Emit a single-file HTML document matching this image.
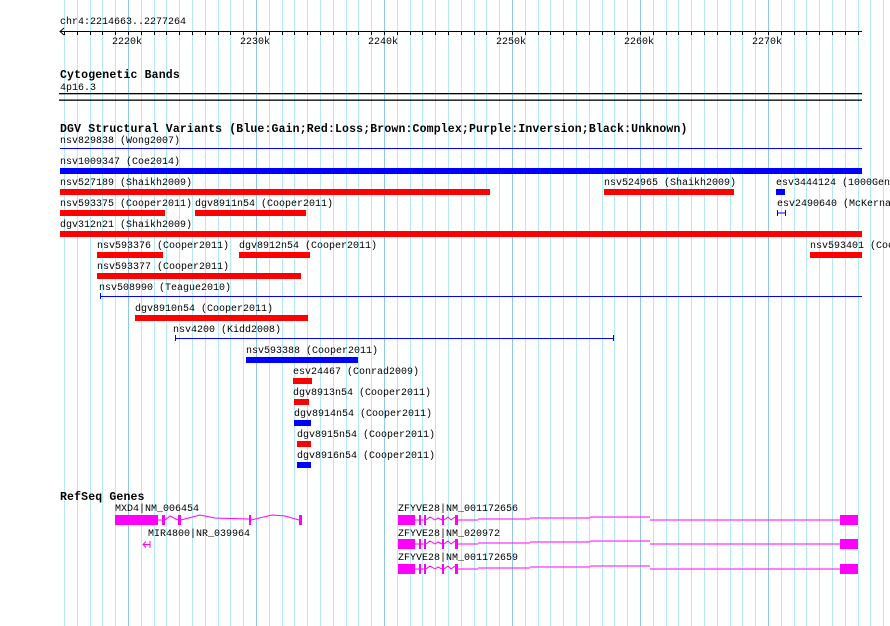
<!DOCTYPE html>
<html><head><meta charset="utf-8"><style>
html,body{margin:0;padding:0;background:#fff;width:890px;height:626px;overflow:hidden}
svg text{font-family:"Liberation Mono","DejaVu Sans Mono",monospace;font-size:10px;fill:#000}
svg text.h{font-weight:bold;font-size:11.5px;letter-spacing:0.15px}
</style></head><body>
<svg id="s" width="890" height="626" xmlns="http://www.w3.org/2000/svg">
<g id="grid"></g>
<g id="ticks"></g>
<text x="60" y="24">chr4:2214663..2277264</text>
<line x1="60" y1="31.5" x2="862" y2="31.5" stroke="#000"/>
<path d="M64 28 L60 31.5 L64 35" fill="none" stroke="#000"/>
<text x="112" y="44">2220k</text>
<text x="240" y="44">2230k</text>
<text x="368" y="44">2240k</text>
<text x="496" y="44">2250k</text>
<text x="624" y="44">2260k</text>
<text x="752" y="44">2270k</text>

<text class="h" x="60" y="78">Cytogenetic Bands</text>
<text x="60" y="90">4p16.3</text>
<rect x="59" y="93" width="803" height="1.3" fill="#000"/>
<rect x="59" y="99.5" width="803" height="1.3" fill="#000"/>

<text class="h" x="60" y="132">DGV Structural Variants (Blue:Gain;Red:Loss;Brown:Complex;Purple:Inversion;Black:Unknown)</text>
<text x="60" y="143">nsv829838 (Wong2007)</text>
<rect x="60" y="148" width="802" height="1" fill="#00f"/>
<text x="60" y="164">nsv1009347 (Coe2014)</text>
<rect x="60" y="168" width="802" height="6" fill="#00f"/>
<text x="60" y="185">nsv527189 (Shaikh2009)</text>
<rect x="60" y="189" width="430" height="6" fill="#f00"/>
<text x="604" y="185">nsv524965 (Shaikh2009)</text>
<rect x="604" y="189" width="130" height="6" fill="#f00"/>
<text x="776" y="185">esv3444124 (1000Gen</text>
<rect x="776" y="189" width="9" height="6" fill="#00f"/>
<text x="60" y="206">nsv593375 (Cooper2011)</text>
<rect x="60" y="210" width="105" height="6" fill="#f00"/>
<text x="195" y="206">dgv8911n54 (Cooper2011)</text>
<rect x="195" y="210" width="111" height="6" fill="#f00"/>
<text x="777" y="206">esv2490640 (McKerna</text>
<path d="M777.5 210v6M785.5 210v6M777 213h9" stroke="#00f"/>
<text x="60" y="227">dgv312n21 (Shaikh2009)</text>
<rect x="60" y="231" width="802" height="6" fill="#f00"/>
<text x="97" y="248">nsv593376 (Cooper2011)</text>
<rect x="97" y="252" width="66" height="6" fill="#f00"/>
<text x="239" y="248">dgv8912n54 (Cooper2011)</text>
<rect x="239" y="252" width="71" height="6" fill="#f00"/>
<text x="810" y="248">nsv593401 (Coo</text>
<rect x="810" y="252" width="52" height="6" fill="#f00"/>
<text x="97" y="269">nsv593377 (Cooper2011)</text>
<rect x="97" y="273" width="204" height="6" fill="#f00"/>
<text x="99" y="290">nsv508990 (Teague2010)</text>
<rect x="100" y="296" width="762" height="1" fill="#00f"/>
<rect x="100" y="293" width="1" height="6" fill="#00f"/>
<text x="135" y="311">dgv8910n54 (Cooper2011)</text>
<rect x="135" y="315" width="173" height="6" fill="#f00"/>
<text x="173" y="332">nsv4200 (Kidd2008)</text>
<rect x="175" y="338" width="439" height="1" fill="#00f"/>
<rect x="175" y="335" width="1" height="6" fill="#00f"/>
<rect x="613" y="335" width="1" height="6" fill="#00f"/>
<text x="246" y="353">nsv593388 (Cooper2011)</text>
<rect x="246" y="357" width="112" height="6" fill="#00f"/>
<text x="293" y="374">esv24467 (Conrad2009)</text>
<rect x="293" y="378" width="19" height="6" fill="#f00"/>
<text x="293" y="395">dgv8913n54 (Cooper2011)</text>
<rect x="294" y="399" width="15" height="6" fill="#f00"/>
<text x="294" y="416">dgv8914n54 (Cooper2011)</text>
<rect x="294" y="420" width="17" height="6" fill="#00f"/>
<text x="297" y="437">dgv8915n54 (Cooper2011)</text>
<rect x="297" y="441" width="14" height="6" fill="#f00"/>
<text x="297" y="458">dgv8916n54 (Cooper2011)</text>
<rect x="297" y="462" width="14" height="6" fill="#00f"/>

<text class="h" x="60" y="500">RefSeq Genes</text>
<text x="115" y="511">MXD4|NM_006454</text>
<g fill="#f0f" stroke="none">
<rect x="115" y="515" width="43" height="10"/>
<rect x="162" y="515" width="3" height="10"/>
<rect x="178" y="515" width="3" height="10"/>
<rect x="249" y="515" width="2" height="10"/>
<rect x="299" y="515" width="3" height="10"/>
</g>
<path d="M158 520 L162 520 M165 520 L170 516 L178 520 M181 520 L200 515 L215 518 L249 519 M251 520 L272 515 L285 516 L299 520" fill="none" stroke="#f0f"/>
<text x="148" y="536">MIR4800|NR_039964</text>
<path d="M150 541v7M143 544.5h7M146 541.5l-3 3 3 3" fill="none" stroke="#f0f"/>

<text x="398" y="511">ZFYVE28|NM_001172656</text>
<text x="398" y="536">ZFYVE28|NM_020972</text>
<text x="398" y="560">ZFYVE28|NM_001172659</text>
<g id="z"></g>
</svg>
<script>
var ns="http://www.w3.org/2000/svg";
function el(t,a,p){var e=document.createElementNS(ns,t);for(var k in a)e.setAttribute(k,a[k]);document.getElementById(p).appendChild(e);}
for(var i=0;i<65;i++){var x=Math.round(64+12.8*i);if(x>889)break;var maj=((i-5)%10===0);
el("rect",{x:x,y:0,width:1,height:626,fill:maj?"#90c8ec":"#b4eaf2"},"grid");
if(x<=862)el("rect",{x:x,y:31,width:1,height:4,fill:"#000"},"ticks");}
[515,539,564].forEach(function(y){
var c=y+5;
el("rect",{x:398,y:y,width:17,height:10,fill:"#f0f"},"z");
[419,424,442,455].forEach(function(x){el("rect",{x:x,y:y,width:2,height:10,fill:"#f0f"},"z");});
el("rect",{x:455,y:y,width:3,height:10,fill:"#f0f"},"z");
el("rect",{x:840,y:y,width:18,height:10,fill:"#f0f"},"z");
el("path",{d:"M415 "+c+"h4 M421 "+c+"h3 M426 "+c+"l4 -3 5 3 M435 "+c+"l3 -2 4 2 M444 "+c+"l4 -3 3 3 l4 -3 M458 "+c+"H478 M478 "+(c-1)+"H530 M530 "+(c-2)+"H590 M590 "+(c-3)+"H650 M650 "+c+"H840",fill:"none",stroke:"#f0f"},"z");
});
</script>
</body></html>
